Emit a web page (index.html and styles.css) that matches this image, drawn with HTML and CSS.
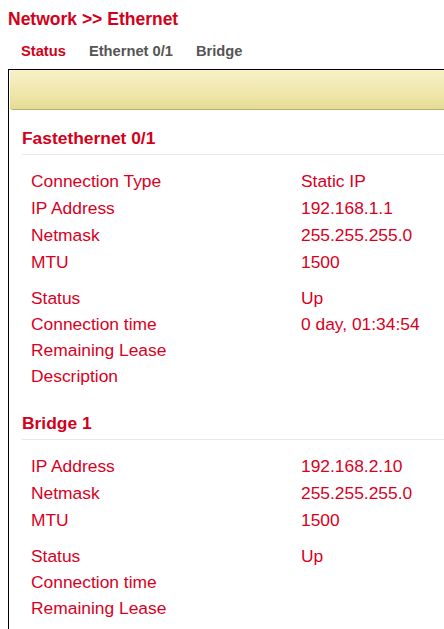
FILE: index.html
```html
<!DOCTYPE html>
<html>
<head>
<meta charset="utf-8">
<link rel="stylesheet" href="styles.css">
</head>
<body>
<div class="page">
  <h1 class="title">Network &gt;&gt; Ethernet</h1>
  <div class="tabs">
    <span class="tab active">Status</span>
    <span class="tab">Ethernet 0/1</span>
    <span class="tab">Bridge</span>
  </div>
  <div class="panel">
    <div class="toolbar"></div>
    <section class="section">
      <h2 class="section-title">Fastethernet 0/1</h2>
      <div class="group g1">
        <div class="label">Connection Type</div><div class="value">Static IP</div>
        <div class="label">IP Address</div><div class="value">192.168.1.1</div>
        <div class="label">Netmask</div><div class="value">255.255.255.0</div>
        <div class="label">MTU</div><div class="value">1500</div>
      </div>
      <div class="group g2">
        <div class="label">Status</div><div class="value">Up</div>
        <div class="label">Connection time</div><div class="value">0 day, 01:34:54</div>
        <div class="label">Remaining Lease</div><div class="value"></div>
        <div class="label">Description</div><div class="value"></div>
      </div>
    </section>
    <section class="section">
      <h2 class="section-title">Bridge 1</h2>
      <div class="group g1">
        <div class="label">IP Address</div><div class="value">192.168.2.10</div>
        <div class="label">Netmask</div><div class="value">255.255.255.0</div>
        <div class="label">MTU</div><div class="value">1500</div>
      </div>
      <div class="group g2">
        <div class="label">Status</div><div class="value">Up</div>
        <div class="label">Connection time</div><div class="value"></div>
        <div class="label">Remaining Lease</div><div class="value"></div>
      </div>
    </section>
  </div>
</div>
</body>
</html>
```
FILE: styles.css
```css
html, body {
  margin: 0;
  padding: 0;
  overflow: hidden;
  background: #ffffff;
}
body {
  font-family: "Liberation Sans", Arial, sans-serif;
  color: #d8001e;
}
.page {
  padding: 9px 0 0 8px;
}
.title {
  margin: 0;
  font-size: 17.5px;
  line-height: 20px;
  font-weight: bold;
  color: #d2001a;
}
.tabs {
  display: flex;
  gap: 23px;
  padding-left: 13px;
  margin-top: 13px;
  height: 27px;
}
.tab {
  font-size: 14.7px;
  line-height: 18px;
  font-weight: bold;
  color: #555555;
}
.tab.active {
  color: #d2001a;
}
.panel {
  border-left: 1px solid #000;
  border-top: 1px solid #000;
  min-height: 600px;
}
.toolbar {
  margin: 0 0 0 1px;
  height: 39px;
  border-bottom: 1px solid #b8ae72;
  border-radius: 3px 0 0 3px;
  background: linear-gradient(to bottom, #f7f1c8 0%, #efe6ac 60%, #e7dc94 100%);
}
.section {
  padding: 0 0 6.5px 13px;
}
.section-title {
  margin: 18px 0 0 0;
  padding-bottom: 6px;
  border-bottom: 1px solid #e8e8e8;
  font-size: 17.4px;
  line-height: 20px;
  font-weight: bold;
  color: #d2001a;
}
.group {
  display: grid;
  grid-template-columns: 270px 1fr;
  padding-left: 9px;
  font-size: 17.4px;
}
.group.g1 {
  margin-top: 13px;
  line-height: 27px;
}
.group.g2 {
  margin-top: 8.5px;
  line-height: 26px;
}
.value {
  min-height: 26px;
}
```
